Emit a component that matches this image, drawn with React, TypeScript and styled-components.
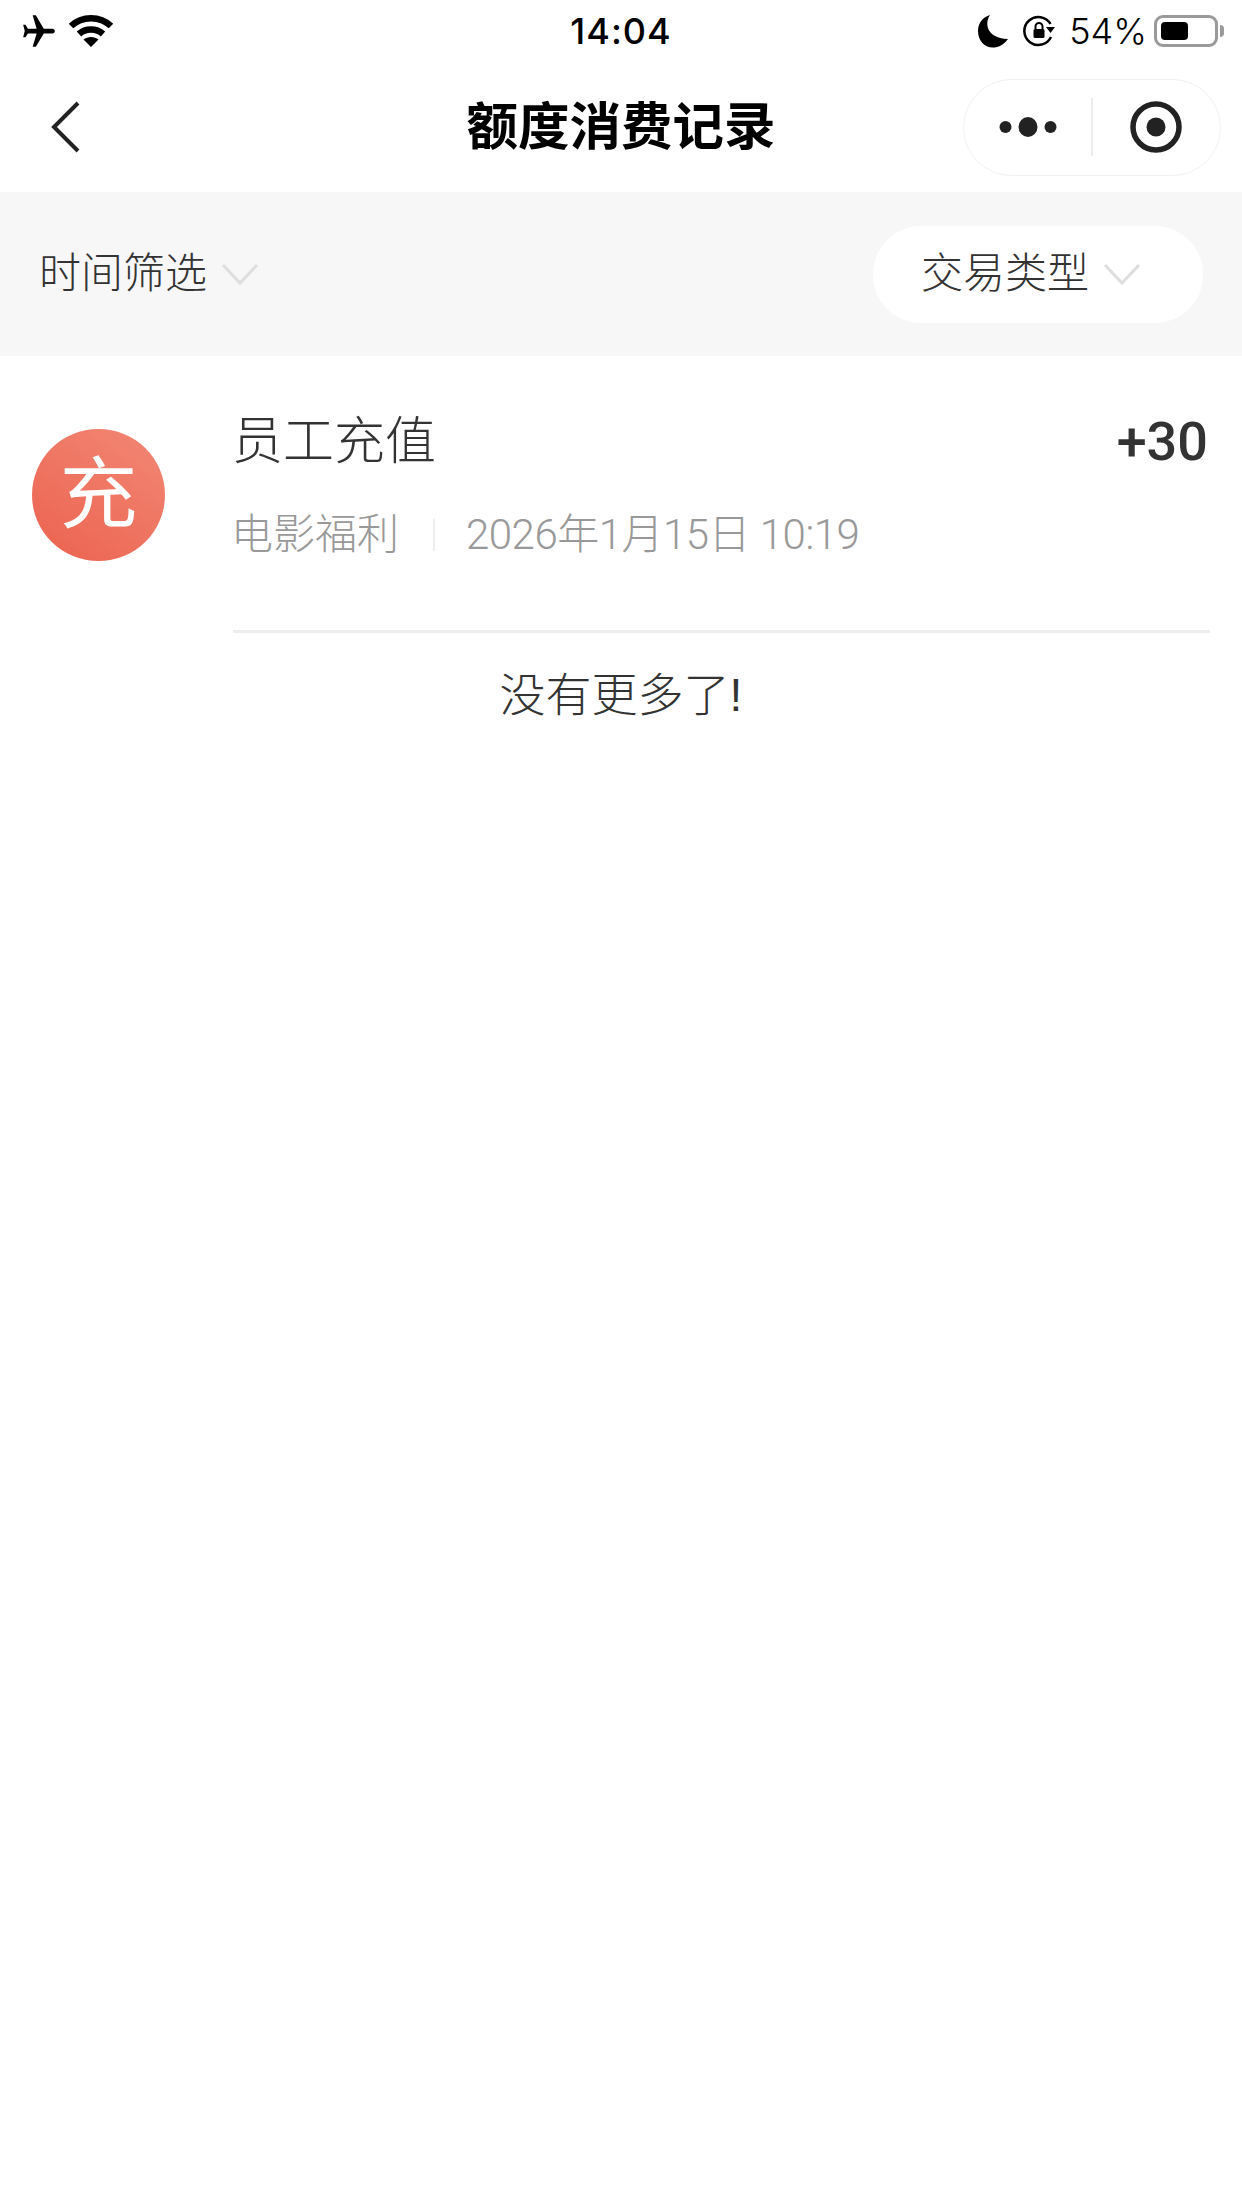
import styled, { createGlobalStyle } from 'styled-components'

const GlobalStyle = createGlobalStyle`
	html,
	body {
		margin: 0;
		padding: 0;
		background: #ffffff;
	}

	body {
		font-family: 'Liberation Sans', 'Noto Sans CJK SC', sans-serif;
	}
`

const Page = styled.div`
	width: 1242px;
	min-height: 2208px;
	background: #ffffff;
	overflow: hidden;
`

const StatusBar = styled.div`
	height: 62px;
	display: grid;
	grid-template-columns: minmax(0, 1fr) auto minmax(0, 1fr);
	align-items: center;
	padding: 0 18px;
	color: #000000;
`

const StatusLeft = styled.div`
	display: flex;
	align-items: center;
	gap: 10px;
	padding-left: 2px;
`

const StatusRight = styled.div`
	display: flex;
	align-items: center;
	justify-content: flex-end;
	gap: 14px;
`

const Time = styled.div`
	font-family: 'Inter', 'Liberation Sans', sans-serif;
	font-size: 36px;
	font-weight: 500;
	line-height: 62px;
	letter-spacing: 1px;
`

const BatteryText = styled.div`
	font-family: 'Inter', 'Liberation Sans', sans-serif;
	font-size: 36px;
	font-weight: 300;
	line-height: 62px;
	margin-right: -7px;
`

const Battery = styled.div`
	display: flex;
	align-items: center;
	gap: 2px;
`

const BatteryBody = styled.div`
	box-sizing: border-box;
	width: 64px;
	height: 32px;
	padding: 4px;
	border: 3px solid #9a9a9a;
	border-radius: 9px;
`

const BatteryLevel = styled.div`
	height: 100%;
	background: #000000;
	border-radius: 4px;
`

const BatteryNub = styled.div`
	width: 4px;
	height: 12px;
	background: #9a9a9a;
	border-radius: 0 4px 4px 0;
`

const NavBar = styled.div`
	height: 130px;
	display: grid;
	grid-template-columns: minmax(0, 1fr) auto minmax(0, 1fr);
	align-items: center;
	padding: 0 21px;
`

const BackButton = styled.div`
	display: flex;
	align-items: center;
	padding-left: 30px;
`

const NavTitle = styled.div`
	font-size: 51.500px;
	font-weight: 700;
	line-height: 70px;
	color: #000000;
`

const Capsule = styled.div`
	justify-self: end;
	box-sizing: border-box;
	width: 258px;
	height: 97px;
	display: flex;
	align-items: center;
	border: 1.5px solid #f1f1f1;
	border-radius: 49px;
	background: #ffffff;
`

const CapsuleCell = styled.div`
	flex: 1;
	display: flex;
	align-items: center;
	justify-content: center;
`

const CapsuleDivider = styled.div`
	width: 1.5px;
	height: 58px;
	background: #ececec;
`

const FilterBar = styled.div`
	height: 164px;
	display: flex;
	align-items: center;
	justify-content: space-between;
	padding: 0 39px;
	background: #f7f7f7;
`

const Filter = styled.div<{ $pill?: boolean }>`
	display: flex;
	align-items: center;
	gap: 14px;
	font-size: 42px;
	font-weight: 300;
	line-height: 60px;
	color: #333333;
	${({ $pill }) =>
		$pill &&
		`
		box-sizing: border-box;
		height: 97px;
		width: 330px;
		padding-left: 48px;
		background: #ffffff;
		border-radius: 48px;
	`}
`

const Row = styled.div`
	display: flex;
	align-items: flex-start;
	gap: 68px;
	padding: 56px 32px 0 32px;
`

const Avatar = styled.div`
	flex: none;
	width: 133px;
	height: 132px;
	margin-top: 17px;
	display: flex;
	align-items: center;
	justify-content: center;
	border-radius: 50%;
	background: linear-gradient(215deg, #f28875 0%, #eb624f 100%);
	color: #ffffff;
	font-size: 78px;
	font-weight: 400;
	line-height: 1;
`

const RowBody = styled.div`
	flex: 1;
	padding-bottom: 70px;
	border-bottom: 3px solid #eeeeee;
`

const RowTop = styled.div`
	display: flex;
	align-items: center;
	justify-content: space-between;
`

const RowTitle = styled.div`
	margin-left: -1px;
	font-size: 51px;
	font-weight: 300;
	line-height: 60px;
	color: #333333;
`

const Amount = styled.div`
	font-family: 'Roboto', 'Liberation Sans', sans-serif;
	font-size: 54px;
	font-weight: 500;
	line-height: 60px;
	color: #333333;
	margin-right: 2px;
`

const RowMeta = styled.div`
	display: flex;
	align-items: center;
	margin: 38px 0 0 -2px;
	font-size: 42px;
	font-weight: 300;
	line-height: 50px;
	color: #999999;
`

const MetaDivider = styled.div`
	width: 2px;
	height: 32px;
	margin: 0 31px 0 34px;
	background: #eeeeee;
`

const MetaDate = styled.div`
	font-family: 'Roboto', 'Liberation Sans', 'Noto Sans CJK SC', sans-serif;
	font-weight: 300;
	letter-spacing: -0.5px;
`

const NoMore = styled.div`
	margin-top: 32px;
	text-align: center;
	font-size: 46px;
	font-weight: 300;
	line-height: 60px;
	color: #333333;
`

const Chevron = () => (
	<svg width="38" height="24" viewBox="0 0 38 24" fill="none">
		<path d="M2 3 L19 21 L36 3" stroke="#dedede" strokeWidth="3" />
	</svg>
)

const AirplaneIcon = () => (
	<svg width="38" height="38" viewBox="0 0 24 24" fill="#000000">
		<path
			transform="rotate(90 12 12)"
			d="M22 16v-2l-8.5-5V3.5C13.5 2.67 12.83 2 12 2s-1.5.67-1.5 1.5V9L2 14v2l8.5-2.5V19L8 20.5V22l4-1 4 1v-1.5L13.500 19v-5.500L22 16z"
		/>
	</svg>
)

const WifiIcon = () => (
	<svg width="46" height="34" viewBox="0 0 46 34" fill="none" stroke="#000000" strokeWidth="6.500">
		<path d="M3 12 C14 1.500 32 1.500 43 12" />
		<path d="M11 20 C17.500 14 28.500 14 35 20" />
		<path d="M23 33 L15.500 25.500 C19.500 22 26.500 22 30.500 25.500 Z" fill="#000000" stroke="none" />
	</svg>
)

const MoonIcon = () => (
	<svg width="32" height="34" viewBox="0 0 32 34" fill="#000000">
		<path d="M13 1 C8 8 8 24 31 25 C27 31 21 33.500 16 33.500 C7 33.500 1 26 1 17 C1 9 6 3 13 1 Z" />
	</svg>
)

const RotationLockIcon = () => (
	<svg width="32" height="32" viewBox="0 0 32 32" fill="none">
		<path d="M28 22 A14 14 0 1 1 27.500 9" stroke="#000000" strokeWidth="2.500" />
		<path d="M23 12 L32 12 L27.500 18 Z" fill="#000000" />
		<rect x="10.500" y="14" width="11" height="9" rx="1.500" fill="#000000" />
		<path d="M12.500 14 V11.500 a3.500 3.500 0 0 1 7 0 V14" stroke="#000000" strokeWidth="2" />
	</svg>
)

const BackIcon = () => (
	<svg width="30" height="52" viewBox="0 0 30 52" fill="none">
		<path d="M27 2 L3 26 L27 50" stroke="#222222" strokeWidth="4" />
	</svg>
)

const DotsIcon = () => (
	<svg width="58" height="26" viewBox="0 0 58 26" fill="#222222">
		<circle cx="6.500" cy="13" r="6" />
		<ellipse cx="29" cy="13" rx="9.500" ry="10" />
		<circle cx="51.500" cy="13" r="6" />
	</svg>
)

const RecordIcon = () => (
	<svg width="52" height="52" viewBox="0 0 52 52" fill="none">
		<circle cx="26" cy="26" r="23" stroke="#222222" strokeWidth="5.500" />
		<circle cx="26" cy="26" r="9.500" fill="#222222" />
	</svg>
)

const App = () => {
	return (
		<Page>
			<GlobalStyle />
			<StatusBar>
				<StatusLeft>
					<AirplaneIcon />
					<WifiIcon />
				</StatusLeft>
				<Time>14:04</Time>
				<StatusRight>
					<MoonIcon />
					<RotationLockIcon />
					<BatteryText>54%</BatteryText>
					<Battery>
						<BatteryBody>
							<BatteryLevel style={{ width: '54%' }} />
						</BatteryBody>
						<BatteryNub />
					</Battery>
				</StatusRight>
			</StatusBar>

			<NavBar>
				<BackButton>
					<BackIcon />
				</BackButton>
				<NavTitle>额度消费记录</NavTitle>
				<Capsule>
					<CapsuleCell>
						<DotsIcon />
					</CapsuleCell>
					<CapsuleDivider />
					<CapsuleCell>
						<RecordIcon />
					</CapsuleCell>
				</Capsule>
			</NavBar>

			<FilterBar>
				<Filter>
					时间筛选
					<Chevron />
				</Filter>
				<Filter $pill>
					交易类型
					<Chevron />
				</Filter>
			</FilterBar>

			<Row>
				<Avatar>充</Avatar>
				<RowBody>
					<RowTop>
						<RowTitle>员工充值</RowTitle>
						<Amount>+30</Amount>
					</RowTop>
					<RowMeta>
						电影福利
						<MetaDivider />
						<MetaDate>2026年1月15日 10:19</MetaDate>
					</RowMeta>
				</RowBody>
			</Row>

			<NoMore>没有更多了!</NoMore>
		</Page>
	)
}

export default App
